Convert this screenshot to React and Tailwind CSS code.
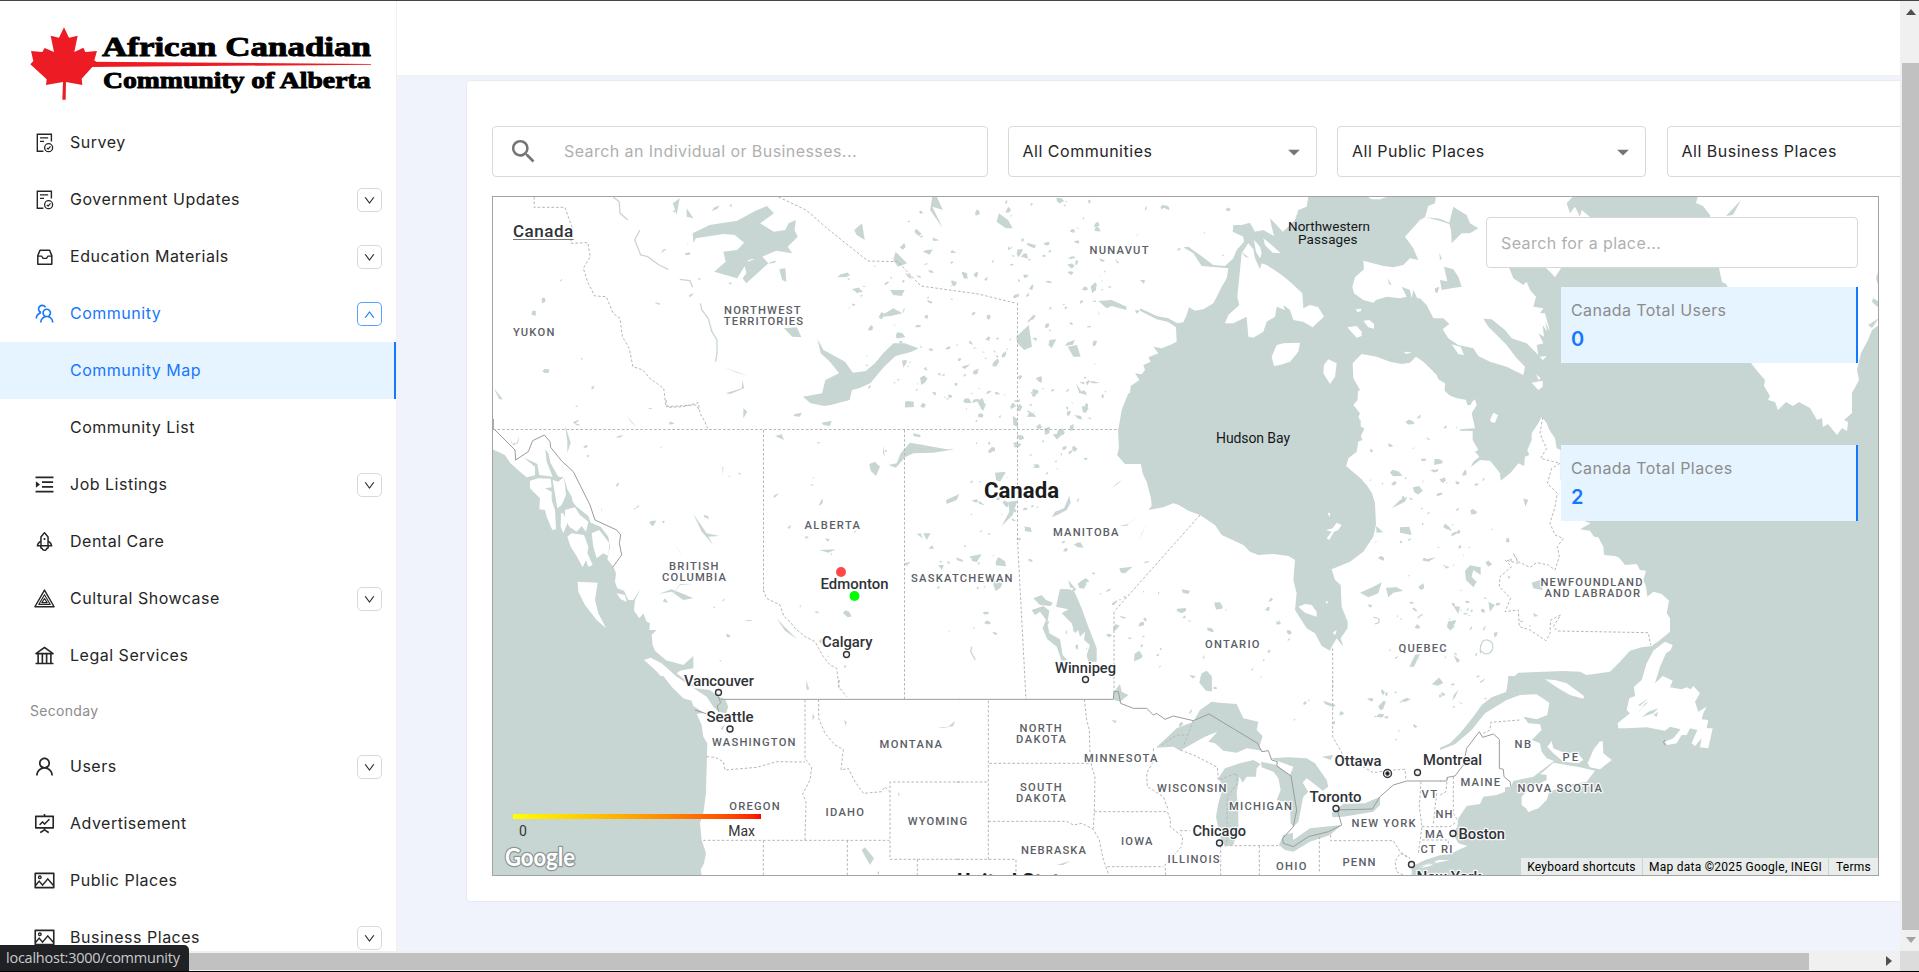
import React from "react";
import {
  AiOutlineTeam,
  AiOutlineMenuUnfold,
  AiOutlineRocket,
  AiOutlineBank,
  AiOutlineUser,
  AiOutlineFundProjectionScreen,
  AiOutlinePicture,
  AiOutlineDown,
  AiOutlineUp,
} from "react-icons/ai";
import { MdSearch, MdArrowDropDown } from "react-icons/md";

const WATER = "#c8d6d3";

function TriangleIcon({ size = 23 }) {
  return (
    <svg width={size} height={size} viewBox="0 0 24 24" fill="none" stroke="currentColor" strokeWidth="1.5" strokeLinejoin="round">
      <path d="M12 3.2 22 20.6H2z" />
      <path d="M12 8 18 18.2H6z" strokeWidth="1.2" />
      <path d="M12 12 14.8 16.3H9.2z" strokeWidth="1.2" />
    </svg>
  );
}

function DocCheckIcon({ size = 23 }) {
  return (
    <svg width={size} height={size} viewBox="0 0 23 23" fill="none" stroke="currentColor" strokeWidth="1.4">
      <path d="M10.4 20.3H4.3V3.2H18.4V10.4" />
      <path d="M7 6.9H15.2 M7 10.4H11" strokeWidth="1.2" />
      <circle cx="15.6" cy="16.7" r="4" strokeWidth="1.3" />
      <path d="M13.8 16.8 15.1 18.1 17.5 15.3" strokeWidth="1.2" />
    </svg>
  );
}

function TrayIcon({ size = 23 }) {
  return (
    <svg width={size} height={size} viewBox="0 0 23 23" fill="none" stroke="currentColor" strokeWidth="1.5" strokeLinejoin="round">
      <path d="M7 5.3H16.6L18.8 10.6V19.2H4.8V10.6Z" />
      <path d="M4.8 11.2H8.8L10 13.4H13.6L14.8 11.2H18.8" strokeWidth="1.3" />
    </svg>
  );
}

function Logo() {
  return (
    <svg width="396" height="114" viewBox="0 0 396 114" className="-mt-px block shrink-0">
      <g transform="scale(.33333)" fill="#ed1c24">
        <path d="M192 82 207 113 233 107 223 156 250 143 256 156 291 153 283 181 290 187 245 236 247 255 198 246 197 299 187 299 189 246 138 255 140 238 91 193 100 183 93 153 127 156 134 144 162 156 152 107 177 113Z" />
        <path d="M270 185 1113 192V194L270 201Z" />
      </g>
      <g fontFamily="'Liberation Serif', serif" fontWeight="700" fill="#000" stroke="#000" strokeWidth=".9">
        <text x="102" y="55.5" fontSize="28" textLength="269" lengthAdjust="spacingAndGlyphs">African Canadian</text>
        <text x="103" y="88" fontSize="23" textLength="267.5" lengthAdjust="spacingAndGlyphs">Community of Alberta</text>
      </g>
    </svg>
  );
}

const PRIMARY = [
  { label: "Survey", Icon: DocCheckIcon },
  { label: "Government Updates", Icon: DocCheckIcon, toggle: true },
  { label: "Education Materials", Icon: TrayIcon, toggle: true },
  { label: "Community", Icon: AiOutlineTeam, toggle: true, open: true },
  { label: "Community Map", selected: true },
  { label: "Community List" },
  { label: "Job Listings", Icon: AiOutlineMenuUnfold, toggle: true },
  { label: "Dental Care", Icon: AiOutlineRocket },
  { label: "Cultural Showcase", Icon: TriangleIcon, toggle: true },
  { label: "Legal Services", Icon: AiOutlineBank },
];
const SECONDARY = [
  { label: "Users", Icon: AiOutlineUser, toggle: true },
  { label: "Advertisement", Icon: AiOutlineFundProjectionScreen },
  { label: "Public Places", Icon: AiOutlinePicture },
  { label: "Business Places", Icon: AiOutlinePicture, toggle: true },
];

function NavRow({ label, Icon, toggle, open, selected }) {
  const tone = selected
    ? "bg-[#e6f4ff] border-r-2 border-[#1677ff] text-[#1677ff]"
    : open
      ? "text-[#1677ff]"
      : "text-[#262626]";
  return (
    <div className={"flex h-[57px] shrink-0 items-center pl-[33px] " + tone}>
      <span className="flex w-[37px] items-center">{Icon && <Icon size={23} />}</span>
      <span className="flex-1 whitespace-nowrap pb-[2px] text-[16px] leading-6 tracking-[0.51px]">{label}</span>
      {toggle && (
        <span className={"mr-[14px] mt-px flex h-6 w-[25px] items-center justify-center rounded-[5px] border bg-white " + (open ? "border-[#1677ff]/70" : "border-[#d9d9d9]")}>
          {open ? <AiOutlineUp size={13} /> : <AiOutlineDown size={13} />}
        </span>
      )}
    </div>
  );
}

function Sidebar() {
  return (
    <aside className="flex w-[397px] shrink-0 flex-col overflow-hidden border-r border-[#f0f0f0] bg-white">
      <Logo />
      {PRIMARY.map((r) => <NavRow key={r.label} {...r} />)}
      <div className="flex h-[54px] shrink-0 items-center pb-[2px] pl-[30px] text-[14px] tracking-[0.3px] text-[#8c8c8c]">Seconday</div>
      {SECONDARY.map((r) => <NavRow key={r.label} {...r} />)}
    </aside>
  );
}

/* Map geometry is kept in tiles; every tile stores coordinates at three units per pixel. */
const at = (x, y) => `translate(${x} ${y}) scale(.33333)`;
const T = {
  arctic: at(1090, 190),
  west: at(480, 400),
  mid: at(960, 400),
  east: at(1440, 400),
  sw: at(480, 680),
  south: at(960, 680),
  se: at(1440, 680),
  north: "translate(480 60) scale(.4592 .33333)",
};

const LAYERS = [
  ["arctic", "water", "M655 18 650 50 625 60 615 90 590 115 570 132 586 134 560 105 540 85 545 110 552 138 520 120 495 125 480 98 455 105 430 105 428 125 460 140 462 155 440 180 430 205 405 228 370 225 330 195 295 170 280 172 310 190 335 228 415 235 410 265 395 290 380 320 370 340 340 358 315 362 297 352 290 375 280 397 262 400 235 385 200 378 180 368 150 355 150 362 200 388 235 396 258 412 260 455 240 465 215 475 190 470 205 490 175 502 182 515 160 525 165 540 155 553 135 550 148 570 122 588 118 630 104 655 92 690 85 720 87 775 82 795 105 822 153 822 158 850 168 872H820L768 828 775 805 800 785 805 755 822 718 812 712 808 685 785 650 803 630 803 605 810 600 790 565 788 520 815 492 860 500 900 515 935 522 960 518 978 500 1000 515 1020 535 1040 555 1045 568 1065 580 1064 602 1078 616 1100 625 1130 630 1135 645 1155 628 1160 645 1145 670 1155 715 1108 718 1148 722 1148 750 1165 780 1155 785 1168 800 1150 815 1142 832 1170 810 1200 812 1215 830 1230 850 1232 872 1262 848 1285 820 1302 828 1305 800 1318 795 1312 780 1325 750 1325 730 1345 700 1355 680 1370 700 1378 720 1395 745 1400 775 1412 780V872H2372V18Z"],
  ["arctic", "land", "M1038 18 1035 40 1015 48 1005 82 990 90 945 140 970 175 985 210 960 205 940 225 910 232 880 228 820 212 822 238 795 262 787 290 792 310 820 330 850 338 858 330 890 320 930 325 950 320 935 290 960 300 965 325 970 300 982 325 990 325 1010 345 1030 385 1060 385 1078 402 1058 418 1075 445 1105 465 1150 475 1165 498 1200 515 1250 530 1300 555 1305 530 1280 505 1250 465 1215 430 1195 410 1180 386 1205 388 1245 420 1265 445 1280 450 1310 460 1345 495 1340 465 1360 460 1345 430 1362 440 1358 405 1372 425 1365 395 1380 425 1365 370 1350 370 1360 355 1330 350 1338 320 1320 300 1310 275 1300 285 1270 265 1257 232 1365 232 1380 245 1395 262 1415 232 1480 150 1500 81 1475 60 1470 80 1455 50 1440 70 1430 40 1450 18Z"],
  ["arctic", "land", "M475 160 455 190 450 240 442 320 448 345 415 375 405 400 430 400 470 380 472 405 475 440 490 443 520 425 530 395 555 380 560 350 585 360 580 345 600 360 610 390 640 395 668 412 685 395 702 380 685 352 660 345 640 355 637 310 600 275 575 255 550 238 530 225 515 220 510 238 495 205 490 178Z M492 150 510 170 515 190 510 205 498 185Z M520 145 545 165 572 190 548 188 525 165Z M545 500 560 465 580 460 630 458 625 485 600 515 570 525 552 528Z M715 508 740 520 735 560 720 582 700 550 702 525Z M772 412 800 408 815 425 815 438 800 443Z M820 392 838 390 852 402 852 416 835 412Z M797 358 815 356 812 364 802 366Z M940 485 965 487 950 492Z M1200 690 1210 668 1224 675 1215 698 1204 697Z M1325 578 1358 572 1358 590 1345 600Z M1338 553 1352 565 1346 570Z M1350 500 1370 498 1358 511Z M833 20H892L870 28H845Z M1085 463 1112 470 1122 495 1105 492Z"],
  ["arctic", "water", "M1005 82 1050 86 1078 98 1090 50 1105 60 1130 75 1140 100 1165 115 1140 130 1115 130 1085 160 1083 120 1078 102 1048 92Z M1062 230 1090 238 1105 260 1115 290 1085 295 1055 300 1050 270 1072 274Z M1048 188 1055 205 1050 212Z M893 265 905 285 897 282Z M1035 295 1048 290 1042 310 1035 305Z M25 333 65 330 110 350 108 360 65 348 50 355Z M135 360 150 362 140 372Z M150 270 165 270 162 282Z M455 185 478 205 465 200Z"],
  ["page", "land", "M1698 196 1696 203 1703 206 1710 215 1712 240 1719 268 1722 282 1726 284 1735 300 1751 363 1758 372 1765 380 1764 386 1770 396 1768 400 1775 402 1778 410 1786 402 1793 406 1799 402 1810 408 1817 420 1822 418 1823 427 1828 424 1837 435 1842 428 1847 431 1848 422 1844 420 1852 413 1852 393 1859 380 1857 370 1861 353 1868 340 1872 330 1879 325V196Z"],
  ["page", "water", "M1873 298 1879 302V308L1872 302Z M1868 325 1879 318 1872 328Z M1741 200 1733 215 1726 216Z M1878 272V285L1876 278Z"],
  ["mid", "water", "M505 -20 485 30 475 90 477 145 472 165 495 192H543L560 245 573 295 575 318 565 330 610 322 640 310 655 314 685 332 720 345 765 375 785 405 850 435 870 455 895 465 940 462 985 468 1005 480 1000 540 1010 580 1005 630 1040 685 1065 700 1085 738 1110 752 1115 740 1130 715 1150 740 1142 715 1163 685 1163 665 1145 620 1142 555 1125 540 1115 508 1170 485 1210 455 1240 410 1248 375 1245 310 1236 280 1220 255 1190 225 1157 200 1165 175 1190 150 1192 125 1208 120 1200 105 1213 85 1202 80 1202 60 1192 60 1200 40 1180 15 1195 -20Z"],
  ["mid", "land", "M1015 620 1035 612 1055 615 1070 635 1070 650 1035 638Z M1103 340 1110 338 1110 352Z M1098 390 1118 385 1130 368 1145 375 1135 390 1122 395 1108 420 1100 415 1115 395Z M1097 602 1105 606 1100 612Z M1118 698 1130 690 1126 705Z"],
  ["mid", "water", "M300 567 330 568 345 578 365 625 385 680 410 745 410 785 385 785 380 765 390 735 372 720 375 695 360 710 355 690 345 700 335 670 305 640 325 628 288 620Z M220 595 245 585 258 600 278 608 272 618 240 615Z M215 630 250 618 268 632 262 670 268 700 300 718 308 765 322 780 305 782 290 740 262 718 248 685 258 660 240 635 225 645Z M325 540 350 570 330 562Z M105 218 138 215 120 245 108 240Z M145 305 172 302 158 345 125 378 148 335Z M312 325 328 288 332 308 320 330 292 345 275 352 285 335Z M35 468 65 462 50 487 35 482Z M158 48 170 55 175 82 160 75Z M253 85 270 80 268 100 255 105Z M60 5 78 12 70 32 62 25Z M478 505 518 500 495 520 483 518Z M665 568 690 572 685 582 668 578Z M725 820 740 812 755 828V872H738L718 848Z M1320 382 1348 380 1355 405 1320 398Z M1295 325 1320 300 1342 290 1335 305Z M1385 480 1428 472 1405 485Z M1200 578 1240 560 1265 547 1255 580 1225 592Z M1278 563 1310 562 1330 572 1300 578 1285 592Z M1348 800 1365 765 1380 762 1362 800Z M1248 378 1270 397 1250 398Z M1375 560 1390 550 1393 565 1382 570Z M545 400 560 370 535 425Z M478 378 500 378 540 340 505 372Z M455 265 488 240 470 250Z"],
  ["west", "water", "M38 148 75 165 90 188 120 215 140 232 165 226 165 200 130 172 172 192 178 225 218 230 200 185 196 148 205 160 212 190 235 230 252 232 262 268 275 290 278 305 290 320 325 348 332 368 362 380 385 410 390 440 382 478 400 500 408 520 405 545 412 565 432 572 445 600 460 600 482 565 465 600 462 632 478 655 490 640 500 665 510 670 508 690 530 690 515 705 518 735 525 752 560 782 575 785 610 795 640 768 640 805 600 812 590 820 640 858 640 875H38Z"],
  ["west", "land", "M150 242 175 235 212 236 215 262 195 265 215 275 215 300 225 330 228 388 217 390 200 350 195 330 178 328 180 295 150 265Z M218 240 235 245 252 230 258 285 245 315 232 325 228 300Z M255 330 285 322 300 345 325 365 318 395 305 378 290 395 268 380 255 355Z M243 340 250 340 262 370 250 400 242 380Z M262 410 275 400 312 405 325 440 322 460 338 495 325 500 318 480 308 502 288 465 272 440Z M335 400 358 390 388 430 385 468 370 460 350 475 340 440Z M293 545 353 548 345 600 355 640 378 685 350 660 315 615 295 575Z M410 580 435 585 440 605 422 598Z M492 780 512 773 545 790 590 830 645 865V880H560L575 868 535 820 520 805Z"],
  ["west", "water", "M1225 195 1250 190 1262 160 1290 128 1330 135 1400 148 1425 148 1360 158 1300 160 1275 172 1248 203Z M1168 192 1185 185 1200 200 1188 228 1172 212Z M1398 300 1438 282 1430 300 1400 312Z M885 108 905 103 912 120Z M1300 100 1322 105 1320 112 1300 108Z M790 25 802 35 790 55Z M945 42 965 38 960 50 940 48Z M1025 68 1055 62 1050 78 1030 75Z M990 -2 1112 -2 1050 16 1020 15Z M640 342 680 400 718 408 685 410 700 435 665 395Z M255 75 272 128 262 158 262 125Z M1035 415 1050 418 1042 425Z M1018 450 1068 448 1045 458Z M535 582 575 568 610 582 640 595 610 600 575 575Z M555 595 565 608 548 605Z M890 655 915 682 952 718 915 692Z M1210 135 1214 170 1209 160Z M588 435 608 472 598 455Z M438 45 470 82 455 68Z M978 840 988 868 980 870Z M792 660 820 660 808 664Z M90 115 95 130 110 130 118 108 114 130 100 136Z M1330 400 1352 400 1340 420Z M1310 402 1322 400 1328 415Z M1375 495 1392 495 1385 510Z M1272 490 1292 485 1280 498Z M728 200 726 225 731 202Z M568 600 600 555 635 555 600 552Z"],
  ["east", "water", "M363 235V362H430L452 370 420 388 450 392 462 410 475 412 490 440 492 465 525 468 548 478 535 470 555 495 590 492 600 510 618 512 610 540 618 560 622 590 640 575 665 582 687 602 680 640 690 655 690 695 660 720 635 738 605 742 570 752 540 785 510 815 440 825 420 815 370 813 235 818 205 845 198 876H1320V235Z"],
  ["east", "water", "M75 512 90 496 122 502 122 525 100 510 95 530 110 545 100 562 78 540Z M275 548 300 540 308 570 280 565Z M145 605 165 615 150 635Z M40 618 60 620 55 642Z M78 0H98L92 15H82Z M60 88 100 88 103 93 60 92Z M280 638 295 648 282 650Z M250 295 265 300 256 320Z M40 765 60 780 52 790Z"],
  ["sw", "water", "M38 -12H550L575 20 610 55 635 62 640 78 672 98 650 102 665 135 670 170 682 190 680 260 678 340 670 400 660 430 665 480 678 520 672 550 662 570 665 587H38Z M640 24 690 30 712 48 735 58 745 80 738 100 715 95 700 80 680 50Z M735 132 728 150 722 146Z M740 100 735 130 742 120Z M1145 510 1155 502 1182 535 1170 555Z M1092 120 1100 125 1098 140Z M1370 143 1405 140 1425 122 1420 138 1390 144Z M998 100 1004 112 997 120Z M1255 335 1260 345 1255 348Z"],
  ["south", "water", "M588 203 650 145 700 125 720 90 755 65 778 68 830 72 850 115 895 125 890 150 908 168 898 200 908 212 860 205 830 218 790 212 765 190 745 185 772 155 735 170 700 190 660 212 640 200Z M768 410 775 370 790 320 775 295 795 265 840 250 880 240 902 252 890 265 888 290 860 290 848 308 838 290 830 340 835 400 835 450 820 495 795 500 780 470Z M903 245 950 255 990 285 1000 260 930 235 985 232 1040 235 1065 250 1100 300 1105 320 1088 332 1060 310 1040 295 1028 308 1045 335 1030 350 1020 400 1015 425 1000 440 992 430 990 370 950 360 962 330 955 295 940 275 905 262Z M957 495 970 465 998 458 1000 480 1050 445 1145 435 1110 465 1050 485 1000 515 975 510Z M1115 400 1150 372 1215 370 1260 350 1260 375 1240 395 1150 410 1118 412Z M460 38 480 12 485 35 505 45 480 65 462 60Z M455 120 470 122 465 130Z M1090 62 1128 75 1120 82 1095 72Z M720 -10H755V35L738 30Z M1085 230 1120 225 1112 240 1098 235Z M290 555 330 543 310 555Z"],
  ["se", "water", "M205 -12 200 35 155 52 125 75 100 110 60 160 30 190 0 203 0 210 45 193 95 150 135 100 200 60 240 45 290 43 328 68 322 105 290 118 250 110 265 130 300 133 305 150 275 180 300 190 305 215 320 235 342 243 280 290 220 303 213 320 195 322 195 335 170 345 130 350 120 372 80 378 55 415 52 440 38 460 55 490 82 498 55 510 30 522 0 526 -45 540 -85 560V587H1320V-12Z"],
  ["se", "land", "M335 183 340 205 365 215 415 222 430 240 415 250 370 245 340 220 322 200Z M310 275 340 248 380 255 420 262 465 272 440 305 380 315 328 335 320 360 295 385 265 396 258 385 245 375 245 350 268 325 320 300 320 285 300 282Z M488 183 490 220 515 240 480 268 450 262 443 250 460 210 478 185Z M-10 545 -30 558 -60 565 -20 545Z M-5 540-40 553-70 562 30 540Z"],
  ["east", "land", "M655 740 675 725 698 735 692 750 678 760 660 800 645 850 668 828 698 842 690 862 725 868 740 862 752 868 760 858 780 880 765 905 775 935 800 920 790 940 785 958 805 960 800 985 818 985 805 1045 780 1042 785 1015 765 1038 755 1030 772 990 750 985 740 1005 725 1005 710 1030 680 1035 675 1025 700 1015 722 988 690 980 675 992 620 982 560 985 535 985 533 970 570 940 560 930 568 895 585 888 582 860 605 840 620 790 640 752Z M315 838 345 840 380 850 432 888 430 896 390 885 350 862Z"],
  ["east", "water", "M595 940 615 910 625 905 600 930Z M625 935 655 925 640 940 605 952Z M640 945 655 935 650 950Z M595 915 625 895 600 918Z"],
  ["north", "water", "M463 520 500 495 560 482 600 452 625 438 640 460 610 490 640 515 665 510 672 490 688 480 685 510 692 530 670 560 680 580 645 572 615 590 628 610 580 670 572 655 580 640 575 610 608 592 585 600 560 655 510 635 535 605 530 575 560 570 575 548 555 525 530 522 470 535 465 550Z M735 838 748 870 795 905 812 938 840 933 860 910 878 880 900 850 925 850 955 865 940 875 905 888 880 920 865 945 850 970 825 985 810 990 805 1020 750 1038 720 1030 703 1010 745 1000 752 960 782 940 762 905 742 880Z M652 628 665 625 667 665 658 660Z M662 805 690 802 700 832 680 830Z M985 411H995L1008 450 985 440 1008 505 980 450Z M1168 830 1195 795 1202 860 1185 870 1170 850Z M1280 860 1300 855 1308 890 1292 890Z M1130 460 1150 480 1160 505 1145 505 1125 485Z M815 510 832 490 838 540 820 525Z M905 575 930 610 910 620 900 600Z M893 690 925 690 918 708 900 705Z M870 770 900 745 920 760 895 768Z M1240 840 1255 838 1245 865 1238 855Z M450 445 465 475 450 470Z M420 430 435 415 428 465Z M1298 970 1312 1000 1305 1000Z M30 985 50 1018 42 1018Z M530 922 585 948 560 938Z M535 1000 570 985 572 960 575 985 545 1002Z"],
];

/* Thin rivers drawn as strokes in water colour. */
const RIVERS = [
  ["north", "M290 411 303 425 305 460 322 480 M348 510 337 540 350 585 365 590 390 615 410 628 M435 658 457 662 463 682 M480 730 483 750 497 775 505 815 516 840 516 880 513 905"],
  ["east", "M122 760 Q118 740 128 724 Q142 714 156 728 Q164 745 150 758 Q136 768 122 752"],
  ["mid", "M1240 652 Q1262 652 1256 668 L1244 672 M35 740 32 755 46 780"],
];

const DASHED = [
  ["page", "M493 429.5H1117 M763.5 430V592 M904.5 430V699 M1017.5 303V540L1026 699 M1114 612V692"],
  ["west", "M850 570 860 595 900 615 912 650 930 665 945 685 975 710 1005 725 1030 770 1050 795 1070 805 1078 870 M558 0 562 22 610 20 655 8 660 40 672 60 683 85"],
  ["north", "M650 411 710 450 760 510 845 603 910 605 960 678 1085 702 1168 730 M118 411V442H185L200 500 198 550 235 548 240 590 225 625 235 668 250 708 275 710 290 760 305 775 310 830 325 865 333 920 355 930 370 955 400 985 405 1040 470 1035 478 1050"],
  ["mid", "M720 345 462 635 M1118 745V870"],
  ["east", "M308 52 300 100 310 125 320 145 302 175 360 190 335 205 322 250 352 280 345 320 330 370 345 405 370 415 352 440 358 470 345 510 325 495 290 488 270 502 235 485 220 460 235 490 195 480 215 500 180 530 178 560 212 595 195 635 235 630 238 680 270 690 318 722 330 700 332 660 362 645 340 680 352 693 625 698 632 735"],
  ["sw", "M975 60V235L995 262 990 300 968 342 978 365 975 480 M670 481H1228 M1016 58V115L1035 160 1065 195 1090 208 1083 270 1105 265 1125 305 1150 340 1205 335 1215 320 1228 335 M1440 306H1230V538H1440 M850 481V585 M1102 481V585 M1312 538V585 M1078 0 1076 20 1100 50 M680 230 705 232 730 245 735 270 830 262 890 245 975 246 M1195 575V585"],
  ["south", "M85 62V540 M-10 306H85 M88 250H390 M-10 538H168V585 M85 424H320L340 435 365 430 400 448 418 480 430 540 445 580 M373 58 380 120 388 150 390 220 395 260 405 290 403 395 400 445 M403 395H622L632 420 630 440 668 470 665 500 615 555 617 585 M442 560H610 M580 205 582 240 560 280 562 320 610 350 625 390 M662 210 700 225 750 250 772 262 775 300 830 280 832 310 802 350 800 495 M605 195 650 165 680 165 M700 122 670 200 M810 497H955 M782 497V585 M898 497V585 M1078 470V580 M1112 465V482H1300L1320 515 1350 535 1320 520 1305 545 1310 575 1330 585 M1118 0V170L1155 235 1200 255 1240 278 1300 270 1335 268 1338 300 M1383 305 1378 380 1386 440 1375 520 M1386 440H1440 M1386 480H1440 M1430 340 1420 430 M660 452H690"],
  ["se", "M130 160 150 150 152 127 240 120 M22 292 18 335 0 345 M40 290V400L55 425 M0 440H30L50 425 M0 480H25V500"],
];

const SOLID = [
  ["west", "M40 57V85L105 150 107 180 145 155 158 122 193 105 210 125 212 142 245 183 280 215 330 315 345 360 410 390 422 405 418 430 425 465 398 502"],
  ["sw", "M722 58H1440 M715 50 722 68 712 78 716 95 M645 90 690 105"],
  ["south", "M-2 58H460L462 35H475L482 70 520 85 560 85 580 105 590 100 615 118 640 108 700 122 747 102 893 190 905 215 925 212 935 240 952 245 950 258 993 288 1010 390 1000 440 968 475 970 490 1000 500 1045 470 1105 455 1145 435 1132 390 1237 387 1260 350 1300 315 1340 303H1442"],
  ["se", "M0 303H20L22 292 45 288 70 255 80 205 118 155 128 172 160 162 178 178V265L190 268 192 290 210 305 213 320"],
  ["se", "M675 180 670 187 677 196"],
];

/* Small lakes: deterministic speckles inside lake-rich areas [x, y, width, height, count]. */
const LAKE_AREAS = [
  [840, 260, 170, 150, 90],
  [900, 200, 230, 60, 34],
  [1010, 255, 100, 160, 66],
  [960, 400, 130, 140, 60],
  [930, 540, 120, 100, 22],
  [1060, 530, 100, 120, 26],
  [1120, 590, 170, 100, 28],
  [1370, 400, 90, 180, 44],
  [1370, 600, 120, 110, 40],
  [1440, 470, 90, 170, 26],
  [520, 400, 220, 60, 9],
  [600, 440, 150, 230, 14],
  [770, 440, 130, 230, 16],
  [640, 200, 150, 120, 14],
  [510, 270, 100, 120, 7],
  [1180, 690, 130, 40, 8],
  [1330, 690, 90, 50, 12],
  [1100, 205, 130, 60, 10],
];
function buildSpeckles() {
  let s = 20250;
  const rnd = () => ((s = (s * 16807) % 2147483647) / 2147483647);
  let d = "";
  for (const [x, y, w, h, n] of LAKE_AREAS) {
    for (let i = 0; i < n; i++) {
      const cx = x + rnd() * w;
      const cy = y + rnd() * h;
      const r = 1.2 + rnd() * rnd() * 5;
      const k = 0.3 + rnd() * 0.6;
      const t = -0.6 + rnd() * 1.9;
      const pts = [0, 1, 2, 3, 4].map((j) => {
        const a = (j / 5) * Math.PI * 2 + rnd();
        const q = r * (0.5 + rnd() * 0.9);
        const px = Math.cos(a) * q;
        const py = Math.sin(a) * q * k;
        return (cx + px * Math.cos(t) + py * Math.sin(t)).toFixed(1) + " " + (cy - px * Math.sin(t) + py * Math.cos(t)).toFixed(1);
      });
      d += "M" + pts.join("L") + "Z";
    }
  }
  return d;
}
const SPECKLES = buildSpeckles();

const REGIONS = [
  ["ALBERTA", 805, 860, 529.2], ["BRITISH", 669.5, 718.5, 570], ["COLUMBIA", 662.5, 726, 581],
  ["SASKATCHEWAN", 911.5, 1012.5, 582], ["MANITOBA", 1053.5, 1118.5, 536], ["ONTARIO", 1205.5, 1259.5, 648],
  ["QUEBEC", 1399, 1446.5, 652], ["NEWFOUNDLAND", 1541, 1642.5, 585.5], ["AND LABRADOR", 1545, 1640, 597],
  ["NUNAVUT", 1090, 1148.5, 254], ["NORTHWEST", 724.5, 800.5, 314], ["TERRITORIES", 724.3, 803, 325],
  ["YUKON", 513.5, 554.5, 336], ["WASHINGTON", 712.5, 795.5, 745.5], ["OREGON", 729.7, 779.7, 810],
  ["IDAHO", 826, 864, 816], ["MONTANA", 880, 942, 747.5], ["WYOMING", 908.3, 967, 825],
  ["NORTH", 1020, 1061.7, 731.5], ["DAKOTA", 1016.5, 1066, 742.5], ["SOUTH", 1020.5, 1061.7, 790.5],
  ["DAKOTA", 1016.5, 1066, 801.5], ["MINNESOTA", 1084.5, 1157.5, 762], ["WISCONSIN", 1157.5, 1226.5, 792],
  ["MICHIGAN", 1229.5, 1292, 810], ["NEBRASKA", 1021.5, 1086, 854], ["IOWA", 1121.5, 1152.5, 844.5],
  ["ILLINOIS", 1168, 1219.5, 863], ["OHIO", 1276.5, 1306.5, 870], ["PENN", 1343, 1375.5, 866],
  ["NEW YORK", 1352, 1415.5, 827], ["VT", 1422, 1437, 797.5], ["NH", 1436, 1452.5, 817.5],
  ["MA", 1425.5, 1443.5, 838], ["CT", 1421, 1435.5, 852.5], ["RI", 1441.5, 1452.5, 852.5],
  ["MAINE", 1461, 1500, 786], ["NB", 1515, 1531, 747.5], ["PE", 1563, 1578, 761], ["NOVA SCOTIA", 1518, 1602, 791.5],
];
const CITIES = [
  ["Edmonton", 820.5, 888.5, 589.2], ["Calgary", 822, 872.5, 647, 846.5, 654.5], ["Vancouver", 684, 754, 685.7, 718.5, 692.5],
  ["Seattle", 706.5, 753.5, 721.5, 730, 729], ["Winnipeg", 1055, 1116, 672.5, 1085.5, 679.5],
  ["Ottawa", 1334.5, 1381.5, 765.5], ["Montreal", 1423, 1482, 765, 1417.5, 772.5], ["Toronto", 1309.5, 1361.5, 802, 1336, 808.5],
  ["Chicago", 1192.5, 1246, 836, 1219.5, 843], ["Boston", 1458.5, 1505, 839, 1453, 833.5], ["New York", 1416.5, 1481.5, 882, 1411.5, 864.5],
];

function MapDrawing() {
  return (
    <svg className="block h-full w-full" viewBox="493 197 1385 678" preserveAspectRatio="none">
      <rect x="493" y="197" width="1386" height="679" fill="#fff" />
      <path d={SPECKLES} fill={WATER} />
      {LAYERS.map(([tile, kind, d], i) => (
        <path key={i} d={d} transform={T[tile]} fill={kind === "water" ? WATER : "#fff"} />
      ))}
      {RIVERS.map(([tile, d], i) => (
        <path key={i} d={d} transform={T[tile]} fill="none" stroke={WATER} strokeWidth="1.3" vectorEffect="non-scaling-stroke" />
      ))}
      {DASHED.map(([tile, d], i) => (
        <path key={i} d={d} transform={T[tile]} fill="none" stroke="#b4b6b8" strokeWidth="1" strokeDasharray="2.6 2" vectorEffect="non-scaling-stroke" />
      ))}
      {SOLID.map(([tile, d], i) => (
        <path key={i} d={d} transform={T[tile]} fill="none" stroke="#9c9c9e" strokeWidth="1" vectorEffect="non-scaling-stroke" />
      ))}
      <g fontFamily="Roboto, sans-serif" stroke="#fff" strokeOpacity=".85" strokeWidth="2.6" strokeLinejoin="round" paintOrder="stroke">
        <g fontSize="11.2" fontWeight="500" fill="#5b6066">
          {REGIONS.map(([t, a, b, y], i) => (
            <text key={i} x={a - 0.5} y={y} textLength={b - a + 0.5}>{t}</text>
          ))}
        </g>
        <g fontSize="14.5" fontWeight="500" fill="#303338">
          {CITIES.map(([t, a, b, y]) => (
            <text key={t} x={a} y={y} textLength={b - a} lengthAdjust="spacingAndGlyphs">{t}</text>
          ))}
        </g>
        <g fontWeight="700" fill="#1b1c20" fontSize="22">
          <text x="984" y="498" textLength="75" lengthAdjust="spacingAndGlyphs">Canada</text>
          <text x="957" y="888" fontSize="20.5">United States</text>
        </g>
      </g>
      <g fontFamily="Roboto, sans-serif" fill="#15181b">
        <text x="1216" y="443" fontSize="14" textLength="74">Hudson Bay</text>
        <text x="1288" y="231" fontSize="13.5" textLength="82">Northwestern</text>
        <text x="1298" y="244" fontSize="13.5" textLength="59.5">Passages</text>
      </g>
      <g fill="#f4f4f4" stroke="#303338" strokeWidth="1.4">
        {CITIES.filter((c) => c[4]).map((c) => (
          <circle key={c[0]} cx={c[4]} cy={c[5]} r="3" />
        ))}
        <circle cx="1387.5" cy="773.5" r="4" fill="#fff" />
        <circle cx="1387.5" cy="773.5" r="1.5" fill="#000" />
      </g>
      <circle cx="841" cy="572" r="5" fill="#ff4848" />
      <circle cx="854.5" cy="596" r="5" fill="#00ff00" />
      <text x="505" y="866" fontFamily="Lato, sans-serif" fontWeight="700" fontSize="24" textLength="70" lengthAdjust="spacingAndGlyphs" fill="#fff" stroke="#8d9795" strokeWidth="2.6" strokeLinejoin="round" paintOrder="stroke">Google</text>
    </svg>
  );
}

function StatCard({ label, value }) {
  return (
    <div className="h-[76px] w-[297px] border-r-2 border-[#1677ff] bg-[#e6f4ff] px-2.5 pt-3">
      <div className="text-[16px] leading-[22px] tracking-[0.42px] text-[#8c8c8c]">{label}</div>
      <div className="mt-[7px] text-[20px] font-semibold leading-[22px] text-[#1677ff]">{value}</div>
    </div>
  );
}

function MapPanel() {
  return (
    <div className="relative h-[680px] w-[1387px] overflow-hidden border border-[#a3a3a3]">
      <MapDrawing />
      <div className="absolute left-5 top-[25px] font-['Roboto'] text-[17px] font-medium leading-[18px] tracking-[0.5px] text-[#303338] underline decoration-[#777] decoration-1 underline-offset-[2px]">Canada</div>
      <div className="absolute right-5 top-5 flex flex-col items-end">
        <div className="flex h-[51px] w-[372px] items-center rounded-[4px] border border-[#d5d8da] bg-white px-[14px] text-[16px] tracking-[0.41px] text-[#b0b0b0]">Search for a place...</div>
        <div className="mt-[19px]"><StatCard label="Canada Total Users" value="0" /></div>
        <div className="mt-[82px]"><StatCard label="Canada Total Places" value="2" /></div>
      </div>
      <div className="absolute left-5 top-[617px] w-[248px] font-['Roboto'] text-[14px] leading-[16px] text-[#333]">
        <div className="h-[5px] bg-linear-to-r from-[#ffff00] to-[#ff0000]" />
        <div className="mt-1 flex justify-between pl-[6px] pr-[6px]"><span>0</span><span>Max</span></div>
      </div>
      <div className="absolute bottom-0 right-0 flex h-[17px] gap-px font-['Roboto'] text-[12px] leading-[18px] tracking-[0.25px] text-black">
        <span className="w-[121px] bg-[#e8ecea] text-center">Keyboard shortcuts</span>
        <span className="w-[185px] bg-[#e8ecea] text-center">Map data ©2025 Google, INEGI</span>
        <span className="w-[49px] bg-[#e8ecea] text-center">Terms</span>
      </div>
    </div>
  );
}

function Select({ label }) {
  return (
    <div className="flex h-[51px] w-[309px] shrink-0 items-center justify-between rounded-[4px] border border-[#d9d9d9] bg-white pl-[14px] pr-[9px] text-[16px] tracking-[0.51px] text-[#262626]">
      <span className="pb-[2px]">{label}</span>
      <MdArrowDropDown size={28} className="-mr-px text-[#757575]" />
    </div>
  );
}

export default function App() {
  return (
    <div className="flex h-[972px] w-[1919px] flex-col overflow-hidden border-t border-[#444] bg-white font-['Inter',sans-serif]">
      <div className="flex h-[950px] min-h-0">
        <Sidebar />
        <main className="flex min-w-0 flex-1 flex-col overflow-hidden bg-[#f0f3fb]">
          <header className="h-[75px] shrink-0 border-b border-[#f0f0f0] bg-white" />
          <section className="ml-[69px] mt-1 h-[822px] w-[1560px] shrink-0 rounded-[4px] border border-[#e6ebf1] bg-white px-[25px] pt-[45px]">
            <div className="flex gap-[20.5px]">
              <div className="-mr-px flex h-[51px] w-[496px] shrink-0 items-center rounded-[4px] border border-[#d9d9d9] pl-[15px] text-[16px] tracking-[0.43px] text-[#b0b0b0]">
                <MdSearch size={31} className="text-[#757575]" />
                <span className="ml-[25px] pb-[2px]">Search an Individual or Businesses...</span>
              </div>
              <Select label="All Communities" />
              <Select label="All Public Places" />
              <Select label="All Business Places" />
            </div>
            <div className="mt-[19px]"><MapPanel /></div>
          </section>
        </main>
        <div className="flex w-[19px] shrink-0 flex-col items-end bg-[#f0f0f0]">
          <div className="flex h-[62px] w-[17px] justify-center pt-[8px]">
            <svg width="10" height="6" viewBox="0 0 10 6"><path d="M5 0 10 6H0z" fill="#505050" /></svg>
          </div>
          <div className="h-[867px] w-[17px] bg-[#c1c1c1]" />
          <div className="flex w-[17px] justify-center pt-[7px]">
            <svg width="10" height="6" viewBox="0 0 10 6"><path d="M0 0H10L5 6z" fill="#a3a3a3" /></svg>
          </div>
        </div>
      </div>
      <div className="relative flex h-[21px] border-b border-black bg-[#f0f0f0]">
        <div className="mt-[2px] h-[17px] w-[1809px] bg-[#c1c1c1]" />
        <div className="flex flex-1 items-center justify-end pr-[8px]">
          <svg width="6" height="10" viewBox="0 0 6 10"><path d="M0 0V10L6 5z" fill="#505050" /></svg>
        </div>
        <div className="w-[19px] bg-[#dcdcdc]" />
        <div className="absolute bottom-0 left-0 flex h-[26px] w-[189px] items-center rounded-tr-[5px] bg-[#202124] pl-[6px] font-['Open_Sans'] text-[14.5px] tracking-[-0.24px] text-[#c9cbce]">localhost:3000/community</div>
      </div>
    </div>
  );
}
